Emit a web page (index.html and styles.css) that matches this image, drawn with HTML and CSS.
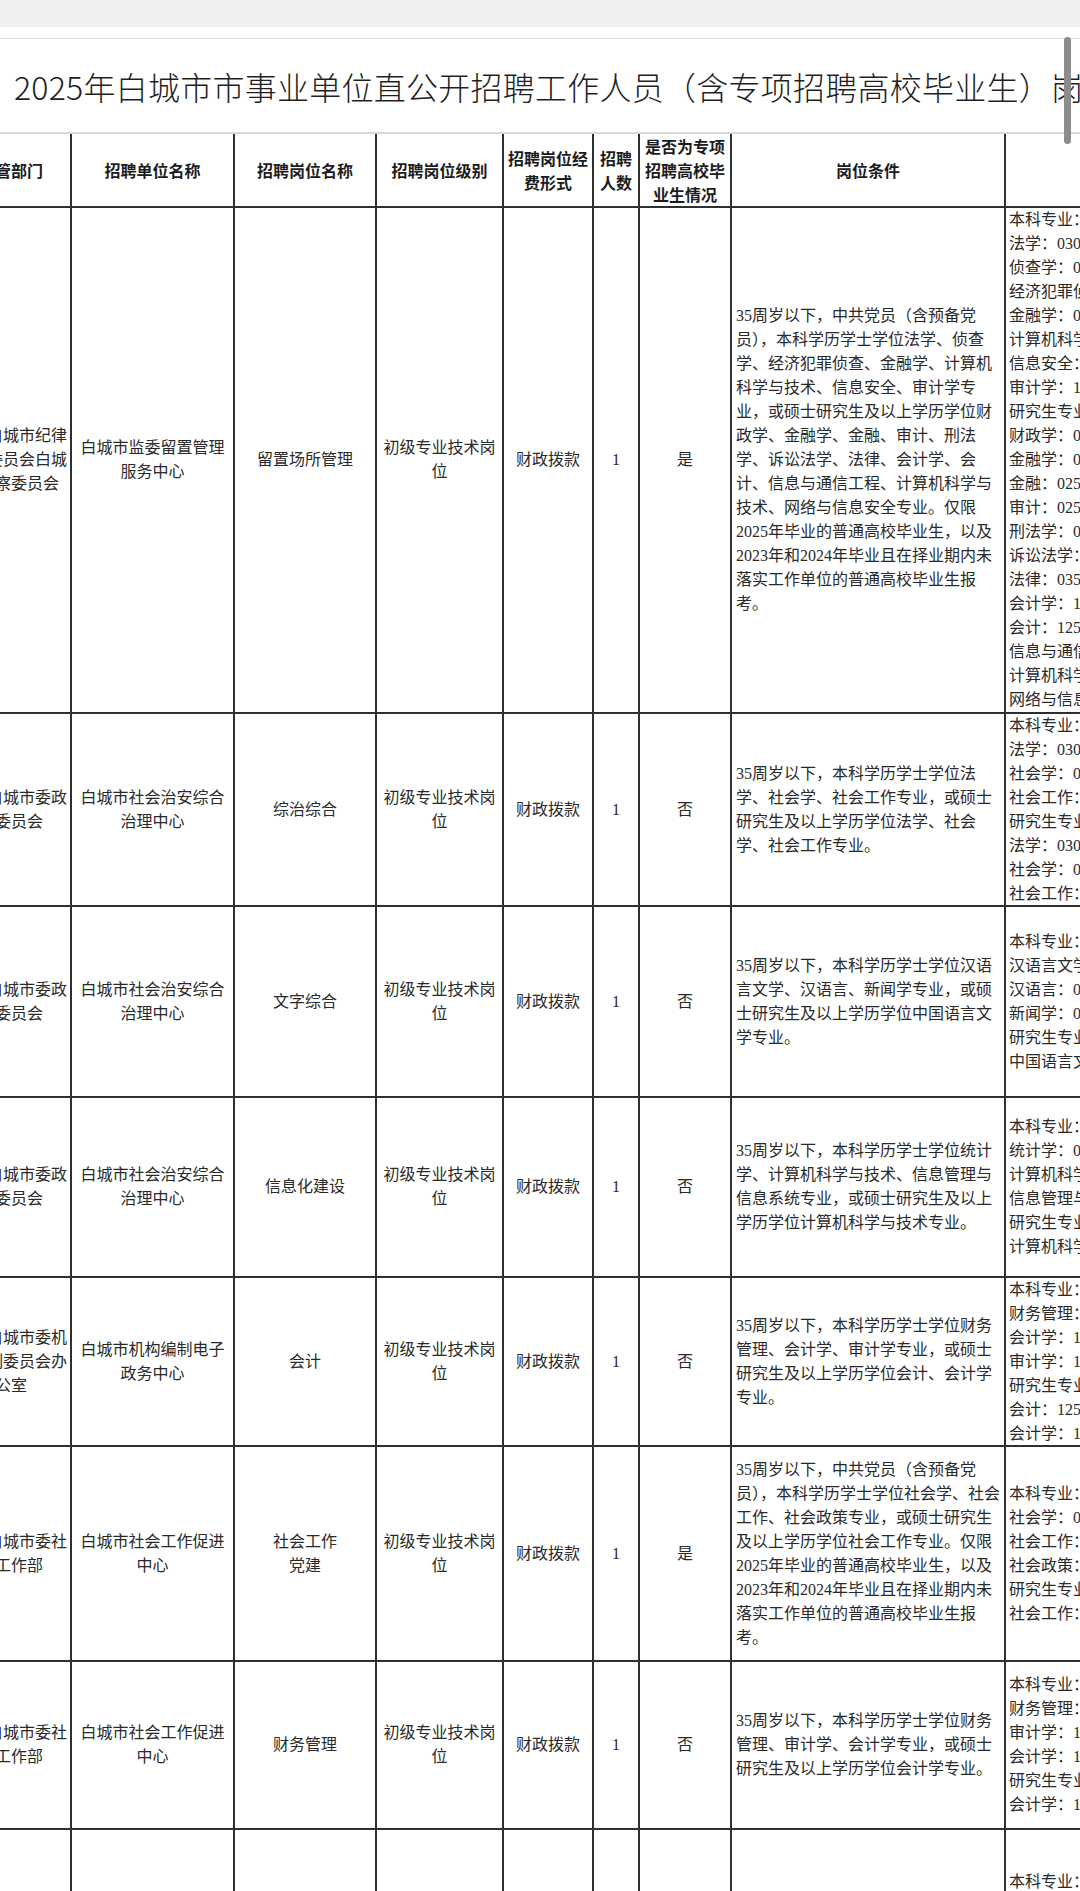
FILE: index.html
```html
<!DOCTYPE html>
<html lang="zh-CN">
<head>
<meta charset="utf-8">
<title>2025年白城市市事业单位直公开招聘工作人员岗位一览表</title>
<link rel="stylesheet" href="styles.css">
</head>
<body>
<div class="page">
  <div class="topbar"></div>
  <div class="doc">
    <div class="title">2025年白城市市事业单位直公开招聘工作人员（含专项招聘高校毕业生）岗位一览表</div>
    <div class="sheet-wrap">
      <div class="sheet">
        <div class="c hd narrow">主管部门</div>
        <div class="c hd">招聘单位名称</div>
        <div class="c hd">招聘岗位名称</div>
        <div class="c hd">招聘岗位级别</div>
        <div class="c hd tight">招聘岗位经费形式</div>
        <div class="c hd">招聘人数</div>
        <div class="c hd">是否为专项招聘高校毕业生情况</div>
        <div class="c hd">岗位条件</div>
        <div class="c hd">专业及代码</div>

        <div class="c narrow">中共白城市纪律检查委员会白城市监察委员会</div>
        <div class="c">白城市监委留置管理服务中心</div>
        <div class="c">留置场所管理</div>
        <div class="c">初级专业技术岗位</div>
        <div class="c tight">财政拨款</div>
        <div class="c">1</div>
        <div class="c">是</div>
        <div class="c cond">35周岁以下，中共党员（含预备党员），本科学历学士学位法学、侦查学、经济犯罪侦查、金融学、计算机科学与技术、信息安全、审计学专业，或硕士研究生及以上学历学位财政学、金融学、金融、审计、刑法学、诉讼法学、法律、会计学、会计、信息与通信工程、计算机科学与技术、网络与信息安全专业。仅限2025年毕业的普通高校毕业生，以及2023年和2024年毕业且在择业期内未落实工作单位的普通高校毕业生报考。</div>
        <div class="c major"><p>本科专业：<br>法学：030101K<br>侦查学：030602K<br>经济犯罪侦查：030613TK<br>金融学：020301K<br>计算机科学与技术：080901<br>信息安全：080904K<br>审计学：120207<br>研究生专业：<br>财政学：020203<br>金融学：020204<br>金融：0251<br>审计：0257<br>刑法学：030104<br>诉讼法学：030106<br>法律：0351<br>会计学：120201<br>会计：1253<br>信息与通信工程：0810<br>计算机科学与技术：0812<br>网络与信息安全：0839</p></div>

        <div class="c narrow">中共白城市委政法委员会</div>
        <div class="c">白城市社会治安综合治理中心</div>
        <div class="c">综治综合</div>
        <div class="c">初级专业技术岗位</div>
        <div class="c tight">财政拨款</div>
        <div class="c">1</div>
        <div class="c">否</div>
        <div class="c cond">35周岁以下，本科学历学士学位法学、社会学、社会工作专业，或硕士研究生及以上学历学位法学、社会学、社会工作专业。</div>
        <div class="c major"><p>本科专业：<br>法学：030101K<br>社会学：030301<br>社会工作：030302<br>研究生专业：<br>法学：0301<br>社会学：0303<br>社会工作：0352</p></div>

        <div class="c narrow">中共白城市委政法委员会</div>
        <div class="c">白城市社会治安综合治理中心</div>
        <div class="c">文字综合</div>
        <div class="c">初级专业技术岗位</div>
        <div class="c tight">财政拨款</div>
        <div class="c">1</div>
        <div class="c">否</div>
        <div class="c cond">35周岁以下，本科学历学士学位汉语言文学、汉语言、新闻学专业，或硕士研究生及以上学历学位中国语言文学专业。</div>
        <div class="c major"><p>本科专业：<br>汉语言文学：050101<br>汉语言：050102<br>新闻学：050301<br>研究生专业：<br>中国语言文学：0501</p></div>

        <div class="c narrow">中共白城市委政法委员会</div>
        <div class="c">白城市社会治安综合治理中心</div>
        <div class="c">信息化建设</div>
        <div class="c">初级专业技术岗位</div>
        <div class="c tight">财政拨款</div>
        <div class="c">1</div>
        <div class="c">否</div>
        <div class="c cond">35周岁以下，本科学历学士学位统计学、计算机科学与技术、信息管理与信息系统专业，或硕士研究生及以上学历学位计算机科学与技术专业。</div>
        <div class="c major"><p>本科专业：<br>统计学：071201<br>计算机科学与技术：080901<br>信息管理与信息系统：120102<br>研究生专业：<br>计算机科学与技术：0812</p></div>

        <div class="c narrow">中共白城市委机构编制委员会办公室</div>
        <div class="c">白城市机构编制电子政务中心</div>
        <div class="c">会计</div>
        <div class="c">初级专业技术岗位</div>
        <div class="c tight">财政拨款</div>
        <div class="c">1</div>
        <div class="c">否</div>
        <div class="c cond">35周岁以下，本科学历学士学位财务管理、会计学、审计学专业，或硕士研究生及以上学历学位会计、会计学专业。</div>
        <div class="c major"><p>本科专业：<br>财务管理：120204<br>会计学：120203K<br>审计学：120207<br>研究生专业：<br>会计：1253<br>会计学：120201</p></div>

        <div class="c narrow">中共白城市委社会工作部</div>
        <div class="c">白城市社会工作促进中心</div>
        <div class="c">社会工作<br>党建</div>
        <div class="c">初级专业技术岗位</div>
        <div class="c tight">财政拨款</div>
        <div class="c">1</div>
        <div class="c">是</div>
        <div class="c cond">35周岁以下，中共党员（含预备党员），本科学历学士学位社会学、社会工作、社会政策专业，或硕士研究生及以上学历学位社会工作专业。仅限2025年毕业的普通高校毕业生，以及2023年和2024年毕业且在择业期内未落实工作单位的普通高校毕业生报考。</div>
        <div class="c major"><p>本科专业：<br>社会学：030301<br>社会工作：030302<br>社会政策：030306T<br>研究生专业：<br>社会工作：0352</p></div>

        <div class="c narrow">中共白城市委社会工作部</div>
        <div class="c">白城市社会工作促进中心</div>
        <div class="c">财务管理</div>
        <div class="c">初级专业技术岗位</div>
        <div class="c tight">财政拨款</div>
        <div class="c">1</div>
        <div class="c">否</div>
        <div class="c cond">35周岁以下，本科学历学士学位财务管理、审计学、会计学专业，或硕士研究生及以上学历学位会计学专业。</div>
        <div class="c major"><p>本科专业：<br>财务管理：120204<br>审计学：120207<br>会计学：120203K<br>研究生专业：<br>会计学：120201</p></div>

        <div class="c narrow">中共白城市委网络安全和信息化委员会办公室</div>
        <div class="c">白城市网络安全应急指挥中心</div>
        <div class="c">网络安全</div>
        <div class="c">初级专业技术岗位</div>
        <div class="c tight">财政拨款</div>
        <div class="c">1</div>
        <div class="c">否</div>
        <div class="c cond">35周岁以下，本科学历学士学位网络工程、信息安全专业，或硕士研究生及以上学历学位网络空间安全专业。</div>
        <div class="c major"><p>本科专业：<br>网络工程：080903<br>信息安全：080904K<br>研究生专业：<br>网络空间安全：0839<br>网络与信息安全：085412</p></div>
      </div>
    </div>
  </div>
  <div class="thumb"></div>
</div>
</body>
</html>
```

FILE: styles.css
```css
* {
  box-sizing: border-box;
}

html,
body {
  margin: 0;
  padding: 0;
  background: #ffffff;
  overflow: hidden;
}

body {
  width: 1080px;
  font-family: "Noto Sans CJK SC", sans-serif;
  color: #222222;
}

.page {
  position: relative;
  width: 1080px;
}

.topbar {
  height: 27px;
  background: #efefef;
  margin-bottom: 11px;
}

.doc {
  border-top: 1px solid #dcdcdf;
}

.title {
  height: 93px;
  display: flex;
  align-items: center;
  padding-left: 14px;
  font-size: 32px;
  font-weight: 300;
  letter-spacing: 0.25px;
  color: #1f1f1f;
  white-space: nowrap;
  overflow: hidden;
}

.sheet-wrap {
  overflow: hidden;
  width: 1080px;
}

.sheet {
  display: grid;
  grid-template-columns: 120px 163px 142px 127px 90px 46px 92px 274px 300px;
  grid-template-rows: 74px 506px 193px 191px 180px 169px 215px 168px 226px;
  width: 1354px;
  margin-left: -48px;
  border-top: 2px solid #d8d8da;
  font-family: "Liberation Serif", "Noto Sans CJK SC", serif;
  font-size: 16px;
  line-height: 24px;
  color: #2a2a2a;
}

.c {
  border-right: 2px solid #2f2f2f;
  border-bottom: 2px solid #2f2f2f;
  display: flex;
  align-items: center;
  justify-content: center;
  text-align: center;
  padding: 0 4px;
  min-width: 0;
}

.narrow {
  padding: 0 2px;
}

.tight {
  padding: 0 3px;
}

.hd {
  font-family: "Noto Sans CJK SC", sans-serif;
  font-weight: 700;
  color: #1c1c1c;
}

.cond {
  justify-content: flex-start;
  text-align: left;
  padding: 0 4px;
}

.major {
  justify-content: flex-start;
  text-align: left;
  padding: 0 3px;
  white-space: nowrap;
}

.major p {
  margin: 0;
}

.thumb {
  position: absolute;
  left: 1064px;
  top: 37px;
  width: 7px;
  height: 107px;
  border-radius: 4px;
  background: #8c8c8c;
}
```
